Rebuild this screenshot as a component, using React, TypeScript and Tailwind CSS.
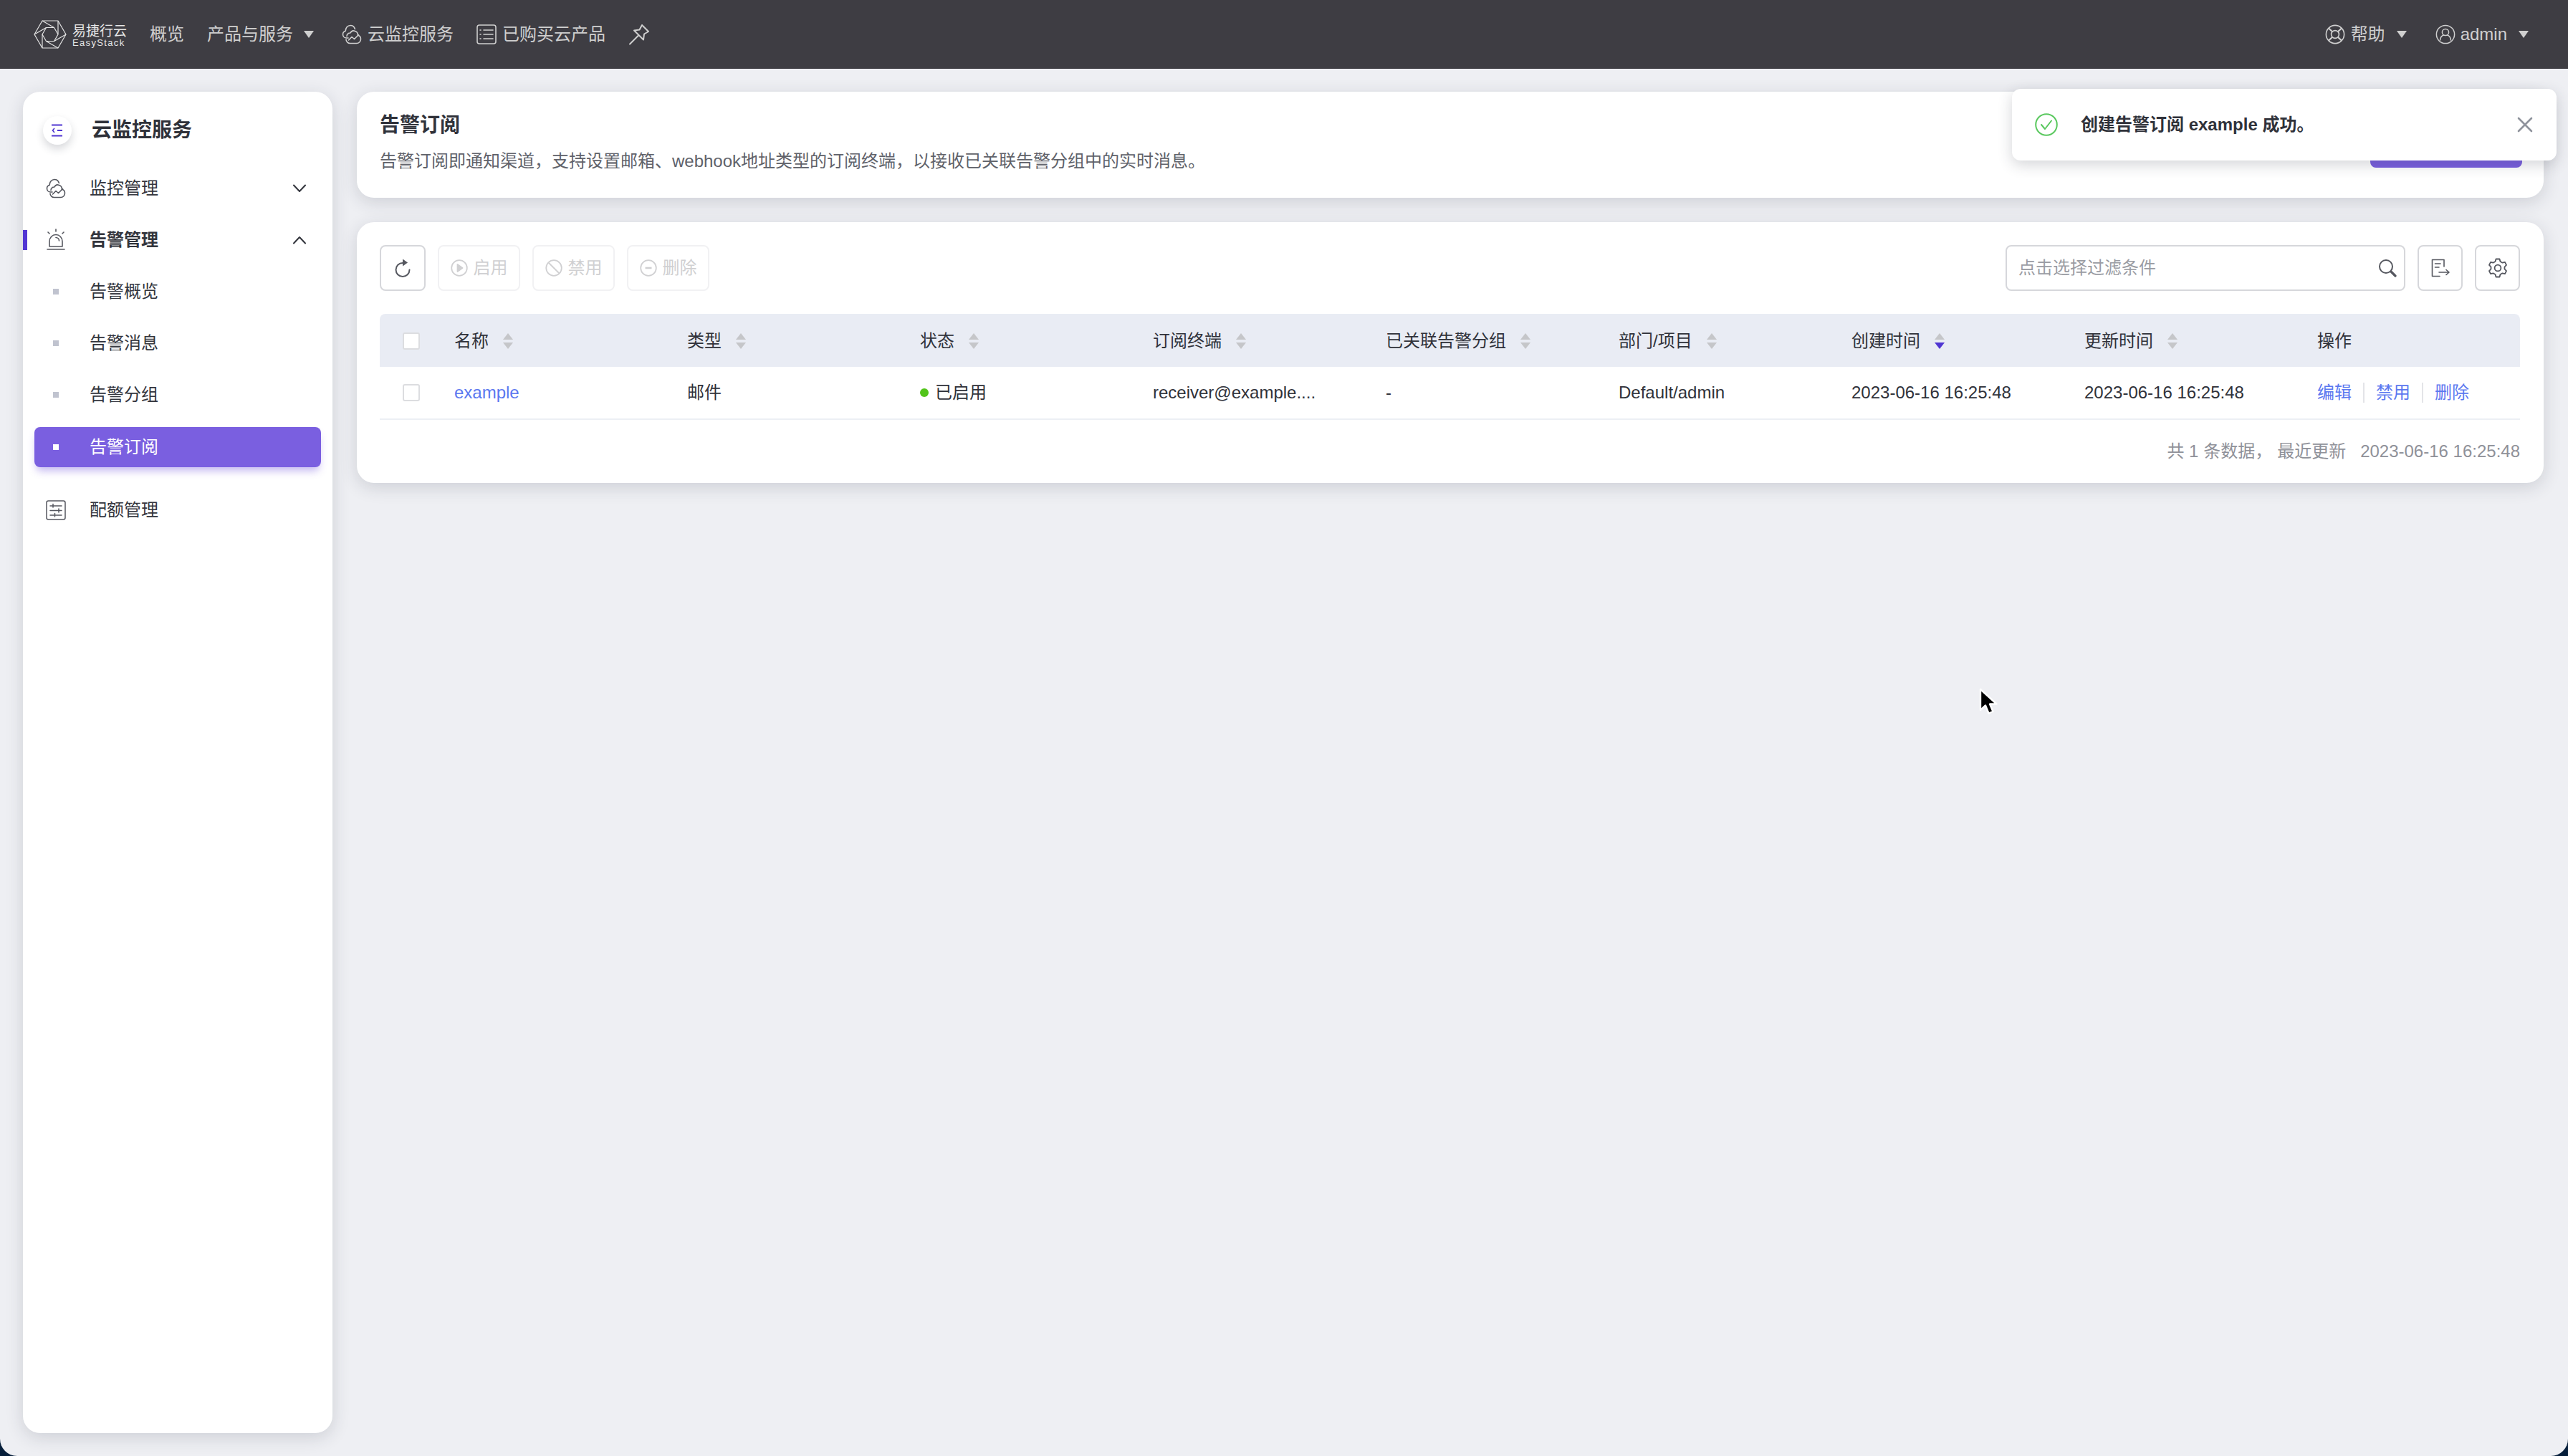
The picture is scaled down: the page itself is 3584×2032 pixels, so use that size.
import React from "react";

const CloudIcon = ({ className = "" }: { className?: string }) => (
  <svg width="28" height="30" viewBox="0 0 28 30" fill="none" stroke="currentColor" strokeWidth="1.6" strokeLinecap="round" strokeLinejoin="round" className={className}>
    <path d="M9 20H6.5C3.5 20 1.5 17.6 1.5 15C1.5 12.6 3 10.8 5.2 10.2C5.2 6 8 2.5 12 2.5C15.2 2.5 17.5 4.5 18.4 7.4" />
    <path d="M7 17.5C7 14.5 9.5 12.8 12 13C13 10.8 15.5 9.5 18 10.2C21 11 22.6 13.4 22.4 16.2C24.8 16.8 26.5 18.8 26.5 21.5C26.5 24.8 24 27.5 20.6 27.5H11.5C8.5 27.5 6 25 6 22" />
    <path d="M9.5 23L14 18.5L17.5 21.5L23.5 15.5" />
  </svg>
);

const ListBoxIcon = () => (
  <svg width="28" height="28" viewBox="0 0 28 28" fill="none" stroke="currentColor" strokeWidth="1.6" strokeLinecap="round">
    <rect x="1" y="1" width="26" height="26" rx="3" />
    <path d="M5 8H6M10 8H23M5 14H6M10 14H23M5 20H6M10 20H23" />
  </svg>
);

const PinIcon = () => (
  <svg width="30" height="30" viewBox="0 0 30 30" fill="none" stroke="currentColor" strokeWidth="2" strokeLinecap="round" strokeLinejoin="round">
    <path d="M19 2L28 11L22 14.5L21 22.5L8 9.5L15.5 8.5Z" />
    <path d="M14 16.5L2 28.5" />
  </svg>
);

const Caret = () => (
  <svg width="16" height="12" viewBox="0 0 16 12" fill="currentColor">
    <path d="M1 1H15L8 11Z" />
  </svg>
);

const HelpIcon = () => (
  <svg width="28" height="28" viewBox="0 0 28 28" fill="none" stroke="currentColor" strokeWidth="1.6">
    <circle cx="14" cy="14" r="12.6" />
    <circle cx="14" cy="14" r="5.4" />
    <path d="M5 5.5L10.2 10.2M23 5.5L17.8 10.2M5 22.5L10.2 17.8M23 22.5L17.8 17.8" strokeWidth="2.2" />
  </svg>
);

const UserIcon = () => (
  <svg width="28" height="28" viewBox="0 0 28 28" fill="none" stroke="currentColor" strokeWidth="1.5" strokeLinecap="round">
    <circle cx="14" cy="14" r="12.6" />
    <circle cx="14" cy="11" r="4.6" />
    <path d="M6.5 22C7 17.8 9.5 15.5 11.5 15M21.5 22C21 17.8 18.5 15.5 16.5 15" />
  </svg>
);

const Logo = () => (
  <svg width="46" height="42" viewBox="0 0 46 42" fill="none" stroke="#e4e4e4" strokeWidth="1.2" strokeLinejoin="round">
    <path d="M1 21L12 2H34L45 21L34 40H12Z" />
    <path d="M12 21L17.5 11.5H28.5L34 21L28.5 30.5H17.5Z" />
    <path d="M12 2L28.5 11.5M34 2L34 21M45 21L28.5 30.5M34 40L17.5 30.5M12 40L12 21M1 21L17.5 11.5" />
  </svg>
);

const AlarmIcon = () => (
  <svg width="28" height="32" viewBox="0 0 28 32" fill="none" stroke="#55575f" strokeWidth="1.6" strokeLinecap="round" strokeLinejoin="round">
    <path d="M14 1V4M3 5L5 7M25 5L23 7" />
    <path d="M5 25V18C5 12.5 9 8.5 14 8.5C19 8.5 23 12.5 23 18V25Z" />
    <path d="M14 12.5C16.5 12.5 18.5 14.5 18.5 17" />
    <path d="M2 29H26" />
  </svg>
);

const QuotaIcon = () => (
  <svg width="28" height="28" viewBox="0 0 28 28" fill="none" stroke="#55575f" strokeWidth="1.5" strokeLinecap="round">
    <rect x="1" y="1" width="26" height="26" rx="2.5" />
    <path d="M6 8H22M6 14.5H22M6 21H22" />
    <path d="M10 5.5V10M18 12V17M12.5 18.5V23" />
  </svg>
);

const Chevron = ({ up = false }: { up?: boolean }) => (
  <svg width="18" height="12" viewBox="0 0 18 12" fill="none" stroke="#33353d" strokeWidth="2" strokeLinecap="round" strokeLinejoin="round">
    <path d={up ? "M1 10.5L9 2L17 10.5" : "M1 1.5L9 10L17 1.5"} />
  </svg>
);

const SortIcon = ({ active = false }: { active?: boolean }) => (
  <svg width="14" height="22" viewBox="0 0 14 22" className="ml-[20px]">
    <path d="M7 0L14 9H0Z" fill="#c5c6c9" />
    <path d="M0 13H14L7 22Z" fill={active ? "#4f35d2" : "#c5c6c9"} />
  </svg>
);

const PlayCircle = () => (
  <svg width="24" height="24" viewBox="0 0 24 24" fill="none" stroke="#d0d0d2" strokeWidth="1.8">
    <circle cx="12" cy="12" r="10.8" />
    <path d="M9.5 7L16.5 12L9.5 17Z" fill="#d0d0d2" strokeLinejoin="round" />
  </svg>
);
const BanCircle = () => (
  <svg width="24" height="24" viewBox="0 0 24 24" fill="none" stroke="#d0d0d2" strokeWidth="1.8">
    <circle cx="12" cy="12" r="10.8" />
    <path d="M4.5 4.5L19.5 19.5" />
  </svg>
);
const MinusCircle = () => (
  <svg width="24" height="24" viewBox="0 0 24 24" fill="none" stroke="#d0d0d2" strokeWidth="1.8">
    <circle cx="12" cy="12" r="10.8" />
    <path d="M7.5 12H16.5" strokeWidth="2.6" />
  </svg>
);

const nav = "text-[24px] leading-[32px] text-[#cfcfcf]";

const Header = () => (
  <header className="flex h-[96px] shrink-0 items-center bg-[#3e3d43] pl-[47px] pr-[54px] text-[#cfcfcf]">
    <Logo />
    <div className="ml-[8px] flex w-[76px] flex-col text-[#e6e6e6]">
      <span className="font-['Noto_Sans_CJK_SC',sans-serif] text-[19px] leading-[22px]">易捷行云</span>
      <span className="text-[13px] leading-[13px] tracking-[1.35px]">EasyStack</span>
    </div>
    <span className={`ml-[32px] ${nav}`}>概览</span>
    <span className={`ml-[32px] ${nav}`}>产品与服务</span>
    <span className="ml-[14px]"><Caret /></span>
    <span className="ml-[38px]"><CloudIcon /></span>
    <span className={`ml-[8px] ${nav}`}>云监控服务</span>
    <span className="ml-[32px]"><ListBoxIcon /></span>
    <span className={`ml-[8px] ${nav}`}>已购买云产品</span>
    <span className="ml-[32px]"><PinIcon /></span>
    <div className="ml-auto flex items-center">
      <HelpIcon />
      <span className={`ml-[8px] ${nav}`}>帮助</span>
      <span className="ml-[15px]"><Caret /></span>
      <span className="ml-[39px]"><UserIcon /></span>
      <span className={`ml-[7px] ${nav}`}>admin</span>
      <span className="ml-[15px]"><Caret /></span>
    </div>
  </header>
);

const Sidebar = () => (
  <aside className="flex w-[432px] shrink-0 flex-col rounded-[24px] bg-white shadow-[0_6px_24px_rgba(40,44,60,0.16)]">
    <div className="ml-[28px] mt-[34px] flex h-[40px] items-center">
      <span className="flex h-[40px] w-[40px] items-center justify-center rounded-full bg-white shadow-[0_6px_12px_rgba(40,44,60,0.18)]">
        <svg width="16" height="18" viewBox="0 0 16 18" stroke="#4f35d2" strokeWidth="2.2" fill="none">
          <path d="M0 1.5H15M8 9H15M0 16.5H15" />
          <path d="M4 6L1.5 9L4 12" strokeWidth="1.6" />
        </svg>
      </span>
      <span className="ml-[28px] text-[28px] font-bold leading-[36px] text-[#30323a]">云监控服务</span>
    </div>
    <div className="mt-[25px] flex h-[72px] items-center pl-[32px] pr-[37px] text-[24px] text-[#33353d]">
      <span className="flex w-[28px] justify-center text-[#55575f]"><CloudIcon /></span>
      <span className="ml-[33px] flex-1">监控管理</span>
      <Chevron />
    </div>
    <div className="relative flex h-[72px] items-center pl-[32px] pr-[37px] text-[24px] font-bold text-[#33353d]">
      <span className="absolute left-0 top-[22px] h-[28px] w-[6px] bg-[#5236d3]" />
      <span className="flex w-[28px] justify-center"><AlarmIcon /></span>
      <span className="ml-[33px] flex-1">告警管理</span>
      <Chevron up />
    </div>
    {["告警概览", "告警消息", "告警分组"].map((t) => (
      <div key={t} className="flex h-[72px] items-center pl-[32px] text-[24px] text-[#33353d]">
        <span className="flex w-[28px] justify-center"><span className="h-[8px] w-[8px] bg-[#c0c3cf]" /></span>
        <span className="ml-[33px]">{t}</span>
      </div>
    ))}
    <div className="mx-[16px] mb-[7px] mt-[9px] flex h-[56px] items-center rounded-[8px] bg-[#7a5fe0] pl-[16px] text-[24px] text-white shadow-[0_8px_12px_-3px_rgba(122,95,224,0.45)]">
      <span className="flex w-[28px] justify-center"><span className="h-[8px] w-[8px] bg-white" /></span>
      <span className="ml-[33px]">告警订阅</span>
    </div>
    <div className="mt-[17px] flex h-[72px] items-center pl-[32px] text-[24px] text-[#33353d]">
      <span className="flex w-[28px] justify-center"><QuotaIcon /></span>
      <span className="ml-[33px]">配额管理</span>
    </div>
  </aside>
);

const DisabledBtn = ({ icon, label }: { icon: React.ReactNode; label: string }) => (
  <button className="flex h-[64px] w-[115px] items-center justify-center gap-[8px] rounded-[8px] border-2 border-[#f1f1f3] bg-white text-[24px] text-[#d0d0d2]">
    {icon}
    <span>{label}</span>
  </button>
);

const IconBtn = ({ w, children }: { w: string; children: React.ReactNode }) => (
  <button className={`flex h-[64px] items-center justify-center rounded-[8px] border-2 border-[#d6d7db] bg-white ${w}`}>
    {children}
  </button>
);

const columns: [string, boolean][] = [
  ["名称", true],
  ["类型", true],
  ["状态", true],
  ["订阅终端", true],
  ["已关联告警分组", true],
  ["部门/项目", true],
  ["创建时间", true],
  ["更新时间", true],
  ["操作", false],
];

const gridCols = "grid grid-cols-[104px_repeat(8,325px)_1fr]";

const Checkbox = () => (
  <span className="ml-[32px] block h-[24px] w-[24px] rounded-[3px] border-2 border-[#dcdde0] bg-white" />
);

const Table = () => (
  <div className="mt-[32px] text-[24px] text-[#30323a]">
    <div className={`${gridCols} h-[74px] items-center rounded-t-[8px] bg-[#e9ecf4] pt-[2px]`}>
      <Checkbox />
      {columns.map(([c, sort]) => (
        <div key={c} className="flex items-center">
          <span>{c}</span>
          {sort && <SortIcon active={c === "创建时间"} />}
        </div>
      ))}
    </div>
    <div className={`${gridCols} h-[74px] items-center border-b-2 border-[#eceff4]`}>
      <Checkbox />
      <span className="text-[#5b78f0]">example</span>
      <span>邮件</span>
      <span className="flex items-center">
        <span className="h-[12px] w-[12px] rounded-full bg-[#52c41a]" />
        <span className="ml-[9px]">已启用</span>
      </span>
      <span>receiver@example....</span>
      <span>-</span>
      <span>Default/admin</span>
      <span>2023-06-16 16:25:48</span>
      <span>2023-06-16 16:25:48</span>
      <span className="flex items-center text-[#5b78f0]">
        <span>编辑</span>
        <span className="mx-[16px] h-[28px] w-[2px] bg-[#e3e4e8]" />
        <span>禁用</span>
        <span className="mx-[16px] h-[28px] w-[2px] bg-[#e3e4e8]" />
        <span>删除</span>
      </span>
    </div>
    <div className="flex h-[88px] items-center justify-end text-[#8f9199]">
      <span>共 1 条数据，</span>
      <span className="ml-[7px]">最近更新</span>
      <span className="ml-[20px]">2023-06-16 16:25:48</span>
    </div>
  </div>
);

const Main = () => (
  <main className="flex min-w-0 flex-1 flex-col gap-[34px]">
    <section className="flex h-[148px] items-start justify-between rounded-[24px] bg-white pl-[32px] pr-[30px] shadow-[0_6px_24px_rgba(40,44,60,0.16)]">
      <div>
        <h1 className="mt-[30px] text-[28px] font-bold leading-[34px] text-[#30323a]">告警订阅</h1>
        <p className="mt-[15px] text-[24px] leading-[36px] text-[#60626a]">
          告警订阅即通知渠道，支持设置邮箱、webhook地址类型的订阅终端，以接收已关联告警分组中的实时消息。
        </p>
      </div>
      <button className="mt-[42px] h-[64px] w-[212px] rounded-[8px] bg-[#7a5fe0] text-[24px] text-white">创建告警订阅</button>
    </section>
    <section className="rounded-[24px] bg-white pl-[32px] pr-[33px] pt-[32px] shadow-[0_6px_24px_rgba(40,44,60,0.16)]">
      <div className="flex items-center">
        <IconBtn w="w-[64px]">
          <svg width="24" height="28" viewBox="0 0 24 28" fill="none" stroke="#55575f" strokeWidth="2" strokeLinecap="round">
            <path d="M12 7A9.5 9.5 0 1 0 21.5 16.5" />
            <path d="M12 1.5L19 6.5L12 11.5Z" fill="#55575f" stroke="none" />
          </svg>
        </IconBtn>
        <div className="ml-[17px] flex gap-[17px]">
          <DisabledBtn icon={<PlayCircle />} label="启用" />
          <DisabledBtn icon={<BanCircle />} label="禁用" />
          <DisabledBtn icon={<MinusCircle />} label="删除" />
        </div>
        <div className="ml-auto flex h-[64px] w-[558px] items-center justify-between rounded-[8px] border-2 border-[#d6d7db] pl-[16px] pr-[10px] text-[24px] text-[#9a9ca3]">
          <span>点击选择过滤条件</span>
          <svg width="26" height="26" viewBox="0 0 26 26" fill="none" stroke="#55575f" strokeWidth="2" strokeLinecap="round">
            <circle cx="11" cy="11" r="9" />
            <path d="M18 18L24 24" strokeWidth="3.2" />
          </svg>
        </div>
        <div className="ml-[17px] flex gap-[17px]">
          <IconBtn w="w-[63px]">
            <svg width="26" height="26" viewBox="0 0 26 26" fill="none" stroke="#55575f" strokeWidth="1.6" strokeLinecap="round" strokeLinejoin="round">
              <path d="M18 11V1.5H1.5V24.5H12" />
              <path d="M5.5 7H13M5.5 12H11" />
              <path d="M11 19H25M21 15.5L25 19L21 22.5" />
            </svg>
          </IconBtn>
          <IconBtn w="w-[63px]">
            <svg width="26" height="28" viewBox="0 0 26 28" fill="none" stroke="#55575f" strokeWidth="1.8" strokeLinejoin="round">
              <path d="M10.5 1.5H15.5L16.5 5L19.5 6.7L23 5.8L25 9.8L22.5 12.5V15.5L25 18.2L23 22.2L19.5 21.3L16.5 23L15.5 26.5H10.5L9.5 23L6.5 21.3L3 22.2L1 18.2L3.5 15.5V12.5L1 9.8L3 5.8L6.5 6.7L9.5 5Z" />
              <circle cx="13" cy="14" r="4.4" />
            </svg>
          </IconBtn>
        </div>
      </div>
      <Table />
    </section>
  </main>
);

const Toast = () => (
  <div className="absolute left-[2808px] top-[124px] flex h-[100px] w-[760px] items-center rounded-[12px] bg-white pl-[32px] pr-[33px] shadow-[0_6px_20px_rgba(40,44,60,0.2)]">
    <svg width="32" height="32" viewBox="0 0 32 32" fill="none" stroke="#5ac85f" strokeWidth="2" strokeLinecap="round" strokeLinejoin="round">
      <circle cx="16" cy="16" r="14.8" />
      <path d="M9 16L14 22L23 10.5" />
    </svg>
    <span className="ml-[32px] flex-1 text-[24px] font-bold text-[#30323a]">创建告警订阅 example 成功。</span>
    <svg width="22" height="22" viewBox="0 0 22 22" fill="none" stroke="#8f939c" strokeWidth="2.6" strokeLinecap="round">
      <path d="M2 2L20 20M20 2L2 20" />
    </svg>
  </div>
);

const Cursor = () => (
  <svg width="28" height="40" viewBox="0 0 28 40" className="absolute left-[2761px] top-[960px]">
    <path d="M3 2V31L10 24.5L14.5 35.5L20.5 33L16 22.5H25.5Z" fill="#000" stroke="#fff" strokeWidth="2.4" strokeLinejoin="round" />
  </svg>
);

export default function App() {
  return (
    <div className="relative h-[2032px] w-[3584px] overflow-hidden bg-[#071f3b] font-['Liberation_Sans','Noto_Sans_CJK_SC',sans-serif]">
      <div className="flex h-full flex-col overflow-hidden rounded-b-[24px] bg-[#eeeff3]">
        <Header />
        <div className="flex min-h-0 flex-1 gap-[34px] pb-[32px] pl-[32px] pr-[34px] pt-[32px]">
          <Sidebar />
          <Main />
        </div>
      </div>
      <Toast />
      <Cursor />
    </div>
  );
}
